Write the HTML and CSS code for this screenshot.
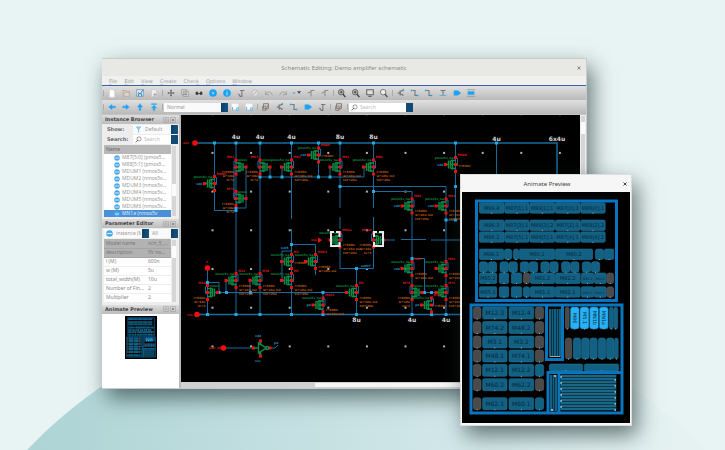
FILE: index.html
```html
<!DOCTYPE html>
<html lang="en">
<head>
<meta charset="utf-8">
<title>Schematic Editing</title>
<link rel="stylesheet" href="styles.css">
</head>
<body>
<svg class="sprite" aria-hidden="true">
  <defs>
    <symbol id="i-new" viewBox="0 0 12 12"><path d="M3 2h4l2 2v7H3z" fill="#fff" stroke="#d2d2d2" stroke-width=".6"/></symbol>
    <symbol id="i-open" viewBox="0 0 12 12"><path d="M2 3h4l1 1h3v6H3z" fill="#ddd4cc" stroke="#c9a58d"/><path d="M3 10l1-5h6" fill="none" stroke="#aaa"/></symbol>
    <symbol id="i-save" viewBox="0 0 12 12"><path d="M2 2h8v8H2z" fill="#d9eef9" stroke="#8298a5"/><path d="M4 10V7h4v3M4 5l2 2 4-5" fill="none" stroke="#2a87c4" stroke-width="1.2"/></symbol>
    <symbol id="i-doc" viewBox="0 0 12 12"><path d="M3 2h6v8H3z" fill="#eee" stroke="#ccc"/><path d="M5 8h4M7 6v4" stroke="#999"/></symbol>
    <symbol id="i-move" viewBox="0 0 12 12"><path d="M6 2v8M2 6h8M5 3h2M5 9h2M3 5v2M9 5v2" stroke="#666" stroke-width="1.3"/></symbol>
    <symbol id="i-copy" viewBox="0 0 12 12"><path d="M2 2h6v6H2zM4 4h6v6H4z" fill="#ddd" stroke="#999"/><path d="M6 5v3h2" fill="none" stroke="#777"/></symbol>
    <symbol id="i-dots" viewBox="0 0 12 12"><path d="M2 5h3v3H2zM7 5h3v3H7zM5 6h2v1H5zM3 4h1v1H3zM8 4h1v1H8z" fill="#333"/></symbol>
    <symbol id="i-ring" viewBox="0 0 12 12"><circle cx="6" cy="6" r="4.6" fill="#1ba4f4"/><circle cx="6" cy="6" r="1.2" fill="#b3e0fa"/></symbol>
    <symbol id="i-info" viewBox="0 0 12 12"><circle cx="6" cy="6" r="4.6" fill="#1ba4f4"/><path d="M6 3v1M6 5v4" stroke="#d0ecfc"/></symbol>
    <symbol id="i-probe" viewBox="0 0 12 12"><path d="M3 7l2 3h2V3h3M5 3h3" fill="none" stroke="#777" stroke-width="1.3"/></symbol>
    <symbol id="i-off" viewBox="0 0 12 12"><circle cx="6" cy="6" r="4" fill="#ddd" stroke="#bbb"/><path d="M4 8l4-4" stroke="#aaa"/></symbol>
    <symbol id="i-undo" viewBox="0 0 12 12"><path d="M2 4v4h4M2 8c2-5 7-4 8 1" fill="none" stroke="#999"/></symbol>
    <symbol id="i-redo" viewBox="0 0 12 12"><path d="M10 4v4H6M10 8C8 3 3 4 2 9" fill="none" stroke="#999"/></symbol>
    <symbol id="i-drop" viewBox="0 0 12 12"><path d="M1 6h3" stroke="#39a5e4" stroke-width="1.3"/><path d="M6 4h5L8.500 7z" fill="#444"/></symbol>
    <symbol id="i-pin" viewBox="0 0 12 12"><path d="M2 6l3-1 1-2h4M6 3v7" fill="none" stroke="#888" stroke-width="1.2"/></symbol>
    <symbol id="i-zoom" viewBox="0 0 12 12"><circle cx="5" cy="5" r="3.3" fill="#eee" stroke="#666"/><path d="M7 7l3 4" stroke="#555" stroke-width="1.800"/></symbol>
    <symbol id="i-zoomin" viewBox="0 0 12 12"><circle cx="5" cy="5" r="3.3" fill="#bbb" stroke="#555"/><path d="M7 7l3 4" stroke="#444" stroke-width="1.800"/><path d="M3.500 5h3M5 3.500v3" stroke="#333"/></symbol>
    <symbol id="i-fit" viewBox="0 0 12 12"><path d="M2 2h8v6H2zM4 10h4" fill="#ddd" stroke="#666" stroke-width="1.3"/></symbol>
    <symbol id="i-inst" viewBox="0 0 12 12"><path d="M5 3v6M5 6H2M6 4l3-2M6 7l3 2" fill="none" stroke="#666" stroke-width="1.3"/><path d="M9 1v3" stroke="#1ba4f4"/></symbol>
    <symbol id="i-wire" viewBox="0 0 12 12"><path d="M3 3h3v6h3" fill="none" stroke="#777" stroke-width="1.3"/><path d="M1 3h2M8 9h2" stroke="#1ba4f4" stroke-width="2"/></symbol>
    <symbol id="i-label" viewBox="0 0 12 12"><path d="M3 3h6M6 3v6" stroke="#777" stroke-width="1.3"/><path d="M2 9h8" stroke="#4aaee4"/></symbol>
    <symbol id="i-tag" viewBox="0 0 12 12"><path d="M2 3h5l4 3-4 3H2z" fill="#1ba4f4"/></symbol>
    <symbol id="i-block" viewBox="0 0 12 12"><path d="M1 2h10M1 10h10" stroke="#999"/><path d="M2 4h8v4H2z" fill="#1ba4f4"/></symbol>
    <symbol id="i-left" viewBox="0 0 12 12"><path d="M2 6l4-3v2h4v2H6v2z" fill="#1ba4f4" stroke="#1ba4f4" stroke-width=".5"/></symbol>
    <symbol id="i-right" viewBox="0 0 12 12"><path d="M10 6L6 3v2H2v2h4v2z" fill="#1ba4f4" stroke="#1ba4f4" stroke-width=".5"/></symbol>
    <symbol id="i-up" viewBox="0 0 12 12"><path d="M6 2l3 4H7v4H5V6H3z" fill="#1ba4f4" stroke="#1ba4f4" stroke-width=".5"/></symbol>
    <symbol id="i-top" viewBox="0 0 12 12"><path d="M3 2h6v1H3zM6 4l3 3H7v3H5V7H3z" fill="#1ba4f4" stroke="#1ba4f4" stroke-width=".5"/></symbol>
    <symbol id="i-pane" viewBox="0 0 12 12"><path d="M2 2h8v7H2z" fill="#fafafa"/><path d="M3 6v4M8 7h2v3H8z" stroke="#48aee8" fill="#fff"/></symbol>
    <symbol id="i-check" viewBox="0 0 12 12"><path d="M3 2h6v6H3zM2 5h4v5H2z" fill="#ccc" stroke="#777"/><path d="M4 7l2 2 3-6" fill="none" stroke="#b56a5c"/></symbol>
    <symbol id="i-funnel" viewBox="0 0 12 12"><path d="M1 1h10L7 6v5H5V6z" fill="#85c5ee"/></symbol>
    <symbol id="i-globe" viewBox="0 0 12 12"><circle cx="6" cy="6" r="5.500" fill="#45a6e8"/><path d="M2 6h8" stroke="#d4ecfb" stroke-width="2"/></symbol>
    <symbol id="i-find" viewBox="0 0 12 12"><circle cx="7" cy="5" r="3.500" fill="#fff" stroke="#555"/><path d="M5 7l-4 4" stroke="#555" stroke-width="1.500"/></symbol>
    <symbol id="i-win" viewBox="0 0 12 12"><path d="M1 1h10v10H1zM4 4h4v4H4z" fill="none" stroke="#999"/></symbol>
    <symbol id="i-shut" viewBox="0 0 12 12"><path d="M1 1h10v10H1z" fill="none" stroke="#999"/><path d="M4 4l4 4M8 4l-4 4" stroke="#777" stroke-width="1.500"/></symbol>
    <symbol id="i-close" viewBox="0 0 12 12"><path d="M3 3l6 6M9 3l-6 6" stroke="currentColor" stroke-width="2"/></symbol>
    <g id="mos">
      <path class="wire" d="M0-7V-3M0 3V7M0-6H2V1H0"/>
      <path class="body" d="M-10 0H-7M-7-4V4M-5-4V4M-5-4H0M-5 4H0M-5 0H0M-3-5V5"/>
      <path class="node-red" d="M-1.500-8.500h3v3h-3zM-1.500-1.500h3v3h-3zM-1.500 5.500h3v3h-3zM-11.500-1.500h3v3h-3z"/>
    </g>
    <pattern id="dots" x="211.500" y="113.200" width="38.600" height="38.700" patternUnits="userSpaceOnUse"><path d="M0 0h2v2h-2z" fill="#b5b5b5"/></pattern>
  </defs>
</svg>

<main class="stage">
  <section class="window" aria-label="Schematic Editing">
    <header class="titlebar"><h1>Schematic Editing: Demo amplifer schematic</h1><button class="close" aria-label="Close"><svg><use href="#i-close"/></svg></button></header>
    <nav class="menubar"><button><u>F</u>ile</button><button><u>E</u>dit</button><button><u>V</u>iew</button><button><u>C</u>reate</button><button>Chec<u>k</u></button><button><u>O</u>ptions</button><button><u>W</u>indow</button></nav>
    <div class="toolbar">
      <div class="group"><button aria-label="New"><svg><use href="#i-new"/></svg></button><button aria-label="Open"><svg><use href="#i-open"/></svg></button><button aria-label="Save"><svg><use href="#i-save"/></svg></button><button aria-label="Export"><svg><use href="#i-doc"/></svg></button></div>
      <div class="group"><button aria-label="Move"><svg><use href="#i-move"/></svg></button><button aria-label="Copy"><svg><use href="#i-copy"/></svg></button><button aria-label="Stretch"><svg><use href="#i-dots"/></svg></button><button aria-label="Delete"><svg><use href="#i-ring"/></svg></button><button aria-label="Properties"><svg><use href="#i-info"/></svg></button><button aria-label="Probe"><svg><use href="#i-probe"/></svg></button><button aria-label="Disable"><svg><use href="#i-off"/></svg></button><button aria-label="Undo"><svg><use href="#i-undo"/></svg></button><button aria-label="Redo"><svg><use href="#i-redo"/></svg></button><button aria-label="More"><svg><use href="#i-drop"/></svg></button><button aria-label="Attach"><svg><use href="#i-pin"/></svg></button><button aria-label="Detach"><svg><use href="#i-pin"/></svg></button></div>
      <div class="group"><button aria-label="Zoom in"><svg><use href="#i-zoomin"/></svg></button><button aria-label="Zoom out"><svg><use href="#i-zoomin"/></svg></button><button aria-label="Fit"><svg><use href="#i-fit"/></svg></button><button aria-label="Zoom area"><svg><use href="#i-zoom"/></svg></button></div>
      <div class="group"><button aria-label="Instance"><svg><use href="#i-inst"/></svg></button><button aria-label="Wire"><svg><use href="#i-wire"/></svg></button><button aria-label="Wide wire"><svg><use href="#i-wire"/></svg></button><button aria-label="Label"><svg><use href="#i-label"/></svg></button><button aria-label="Pin"><svg><use href="#i-tag"/></svg></button><button aria-label="Block"><svg><use href="#i-block"/></svg></button></div>
    </div>
    <div class="toolbar">
      <div class="group"><button aria-label="Back"><svg><use href="#i-left"/></svg></button><button aria-label="Forward"><svg><use href="#i-right"/></svg></button><button aria-label="Up"><svg><use href="#i-up"/></svg></button><button aria-label="Top"><svg><use href="#i-top"/></svg></button></div>
      <div class="group"><select class="combo mode" aria-label="Mode"><option>Normal</option></select><button aria-label="Save view"><svg><use href="#i-pane"/></svg></button><button aria-label="Load view"><svg><use href="#i-pane"/></svg></button></div>
      <div class="group"><button aria-label="Check"><svg><use href="#i-check"/></svg></button><button aria-label="Place"><svg><use href="#i-inst"/></svg></button><button aria-label="Route"><svg><use href="#i-wire"/></svg></button><button aria-label="Flag"><svg><use href="#i-tag"/></svg></button><button aria-label="Trace"><svg><use href="#i-probe"/></svg></button></div>
      <div class="group"><button aria-label="Verify"><svg><use href="#i-check"/></svg></button></div>
      <div class="group"><label class="field find"><svg><use href="#i-find"/></svg><input type="search" placeholder="Search" aria-label="Search design"></label></div>
    </div>
    <div class="workspace">
      <aside class="sidebar">
        <section>
          <h2>Instance Browser<svg><use href="#i-win"/></svg><svg><use href="#i-shut"/></svg></h2>
          <div class="row"><label for="show">Show:</label><span class="field"><svg><use href="#i-funnel"/></svg><select id="show" class="combo"><option>Default</option></select></span></div>
          <div class="row"><label for="search">Search:</label><span class="field find"><svg><use href="#i-find"/></svg><input id="search" type="search" placeholder="Search"></span></div>
          <div class="scroller instances">
            <div class="list">
              <h3>Name</h3>
              <ul>
                <li><svg><use href="#i-globe"/></svg>M87[5:0] (pmos5...</li>
                <li><svg><use href="#i-globe"/></svg>M88[5:1] (pmos5...</li>
                <li><svg><use href="#i-globe"/></svg>MDUM1 (nmos5v...</li>
                <li><svg><use href="#i-globe"/></svg>MDUM2 (nmos5v...</li>
                <li><svg><use href="#i-globe"/></svg>MDUM3 (nmos5v...</li>
                <li><svg><use href="#i-globe"/></svg>MDUM4 (nmos5v...</li>
                <li><svg><use href="#i-globe"/></svg>MDUM5 (nmos5v...</li>
                <li><svg><use href="#i-globe"/></svg>MDUM6 (nmos5v...</li>
                <li class="selected"><svg><use href="#i-globe"/></svg>MN1a (nmos5v</li>
              </ul>
            </div>
            <div class="vbar"><i class="low"></i></div>
          </div>
        </section>
        <section>
          <h2>Parameter Editor<svg><use href="#i-win"/></svg><svg><use href="#i-shut"/></svg></h2>
          <div class="row tight"><span class="field"><svg><use href="#i-globe"/></svg><select class="combo" aria-label="Scope"><option>instance (M</option></select></span><select class="combo half" aria-label="Filter"><option>All</option></select></div>
          <div class="scroller">
            <table>
              <tr class="fixed"><th>Model name</th><td>nch_5_...</td></tr>
              <tr class="fixed"><th>description</th><td>5V no...</td></tr>
              <tr><th>l (M)</th><td>600n</td></tr>
              <tr><th>w (M)</th><td>5u</td></tr>
              <tr><th>total_width(M)</th><td>10u</td></tr>
              <tr><th>Number of Fin...</th><td>2</td></tr>
              <tr><th>Multiplier</th><td>2</td></tr>
            </table>
            <div class="vbar"><i></i></div>
          </div>
        </section>
        <section class="thumb">
          <h2>Animate Preview<svg><use href="#i-win"/></svg><svg><use href="#i-shut"/></svg></h2>
          <svg class="mini" viewBox="463 192 168 231" preserveAspectRatio="none"><rect x="463" y="192" width="168" height="231"/><use href="#layout"/></svg>
        </section>
      </aside>
      <div class="editor">
        <svg class="canvas" viewBox="181 115 399 267" role="img" aria-label="Amplifier schematic">
          <rect x="181" y="115" width="399" height="267"/>
          <rect x="181" y="115" width="399" height="267" fill="url(#dots)"/>
          <path class="wire rail" d="M195 143H557V200M197 314.500H470"/>
          <path class="wire" d="M214.500 143V210.500H236M236 143V314M260 143V314M291.500 143V219M291.500 229V314M318.500 143V177M260 177H364V167M270 167V177M282 167V177M330 167V177M246 167V208H236M234 167V198H236M340 143V208M340 217V229M340 236V268.500H373.500V217M373.500 143V208M340 186.500H446V314M373.500 191.500H412V314M455.500 143V220H446M496.500 143V180M207.500 268V314M207.500 282.500H219V292.500M217 292.500H347M226 280V292M250 280V292M291.500 244.500H315.500V275M291.500 251H282V280M356.500 268.500V314M412 258.500H424.500V292.500H436M323 292V314M384 240H395M401 239.500H426M431 240H460M223 348H253M270 348H275L278 345"/>
          <path class="join" d="M213 141.500h3v3h-3zM234.500 141.500h3v3h-3zM258.500 141.500h3v3h-3zM290 141.500h3v3h-3zM317 141.500h3v3h-3zM338.500 141.500h3v3h-3zM372 141.500h3v3h-3zM454 141.500h3v3h-3zM495 141.500h3v3h-3zM258.500 175.500h3v3h-3zM268.500 175.500h3v3h-3zM280.500 175.500h3v3h-3zM317 175.500h3v3h-3zM328.500 175.500h3v3h-3zM338.500 185h3v3h-3zM372 190h3v3h-3zM234.500 207h3v5h-3zM454 185h3v3h-3zM454 218.500h3v3h-3zM444.500 218.500h3v3h-3zM290 243h3v3h-3zM206 313h3v3h-3zM234.500 313h3v3h-3zM258.500 313h3v3h-3zM290 313h3v3h-3zM321.500 313h3v3h-3zM355 313h3v3h-3zM410.500 313h3v3h-3zM444.500 313h3v3h-3zM430 313h3v3h-3zM217.500 291h3v3h-3zM225 291h3v3h-3zM249 291h3v3h-3zM321.500 291h3v3h-3zM355 267h3v3h-3zM206 281h3v3h-3zM423 291h3v3h-3zM430 291h3v3h-3zM410.500 257h3v3h-3z"/>
          <g id="devices"></g>
          <path class="bracket" d="M334 232H331V246H339.500V242M339.500 237V232H336M379 232H383V246H374V242M374 237V232H377"/>
          <g class="node-red"><circle cx="195" cy="143" r="2.800"/><circle cx="197" cy="314.500" r="2.800"/><circle cx="207.500" cy="268" r="2.800"/><circle cx="223.500" cy="348" r="2.800"/><path d="M318 237.500l4 2.500-4 3zM252 346.500h3v3h-3zM268.500 346.500h3v3h-3zM259 339.500h3v3h-3zM259 354.500h3v3h-3z"/></g>
          <path class="body" d="M258.500 343V353L266 348ZM260.500 342V344M260.500 352V355M254 348H258"/><circle class="body" cx="267" cy="348" r="1.500"/>
          <g class="size"><text x="236" y="139">4u</text><text x="260" y="139">4u</text><text x="291.500" y="139">4u</text><text x="340" y="139">8u</text><text x="373.500" y="139">8u</text><text x="496.500" y="141">4u</text><text x="557" y="141">6x4u</text><text x="356.500" y="322">8u</text><text x="412" y="322">4u</text><text x="446" y="322">4u</text></g>
          <g class="red"><text x="183" y="144">out</text><text x="187" y="316">vss</text><text x="206" y="263">ii</text><text x="209" y="349">pwr_dn</text><text x="311" y="241">inp</text></g>
          <g class="blue"><text x="255" y="337">vdd</text><text x="255" y="362">vss</text><text x="274" y="344">pd</text><text x="281" y="249">net5</text><text x="361" y="267">net07</text></g>
        </svg>
        <div class="vbar"><i></i></div>
        <div class="hbar"><i></i></div>
      </div>
    </div>
  </section>

  <section class="window preview" aria-label="Animate Preview">
    <header class="titlebar"><h1>Animate Preview</h1><button class="close" aria-label="Close preview"><svg><use href="#i-close"/></svg></button></header>
    <svg class="layout" viewBox="463 192 168 231" role="img" aria-label="Device layout"><rect x="463" y="192" width="168" height="231"/><g id="layout"></g></svg>
  </section>
</main>
<script src="drawing.js"></script>
</body>
</html>
```
FILE: styles.css
```css
* { box-sizing: border-box; }
body {
  margin: 0;
  min-height: 100vh;
  background: #e8f3f3;
  font: 5px/7px "Noto Sans", sans-serif;
  color: #666;
}
h1, h2, h3, ul { margin: 0; padding: 0; font-size: inherit; list-style: none; }
button, input, select { font: inherit; color: inherit; border: 0; margin: 0; padding: 0; background: none; }
.sprite { position: absolute; width: 0; height: 0; }

.stage {
  position: relative;
  min-height: 100vh;
  padding: 58px 138px 0 102px;
  background: radial-gradient(circle at 366px 772px, transparent 467px, #e8f3f3 468px), linear-gradient(90deg, #aed4d5 40px, #d4e8ea 480px, #e6f2f2 680px);
  overflow: hidden;
}

.window {
  background: #f0f0ef;
  border: 1px solid #c9cccb;
  border-width: 1px 1px 1px 0;
  box-shadow: 5px 9px 20px rgba(30, 50, 50, .65);
}
.titlebar { display: flex; align-items: center; height: 17px; padding: 0 4px 0 10px; background: #e8e8e5; color: #888; }
.titlebar h1 { flex: 1; text-align: center; font: 6px/10px "Noto Sans", sans-serif; }
.close { display: flex; }
.close svg { width: 6px; height: 6px; }

.menubar { display: flex; gap: 7px; height: 10px; padding: 0 0 0 7px; border-bottom: 1px solid #3a62a8; font: 5px/8px "DejaVu Sans", sans-serif; color: #999; }
.menubar u { text-decoration-thickness: 1px; text-decoration-color: #ccc; }

.toolbar { display: flex; height: 14px; background: linear-gradient(#e0e0e0, #b9b9b9); }
.toolbar:last-of-type { height: 15px; }
.group { display: flex; align-items: center; padding-left: 3px; background: linear-gradient(#aaa, #aaa) 1px center / 1px 6px no-repeat; }
.group button { display: flex; justify-content: center; width: 14px; }
.group svg { width: 10px; height: 10px; }

.combo {
  appearance: none;
  flex: 1;
  min-width: 0;
  height: 9px;
  padding: 0 8px 0 3px;
  color: #999;
  background: linear-gradient(90deg, #0c3f6b, #17527f) right / 7px 100% no-repeat #fafafa;
}
.mode { width: 64px; flex: none; }
.field { display: flex; align-items: center; flex: 1; min-width: 0; height: 9px; background: #f7f9fa; }
.field svg { width: 7px; height: 7px; margin-left: 2px; flex: none; }
.field input { flex: 1; width: 38px; min-width: 0; height: 9px; padding-left: 2px; outline: 0; }
.field input::placeholder { color: #bbb; opacity: 1; }
.find { border-right: 7px solid #124a76; background: #fff; }
.group .field { width: 64px; flex: none; }

.workspace { display: grid; grid-template-columns: 79px minmax(0, 1fr); padding-top: 1px; background: #c4c4c4; }
.sidebar { display: flex; flex-direction: column; gap: 2px; border-right: 2px solid #bbb; background: #ededed; }
.sidebar h2 { display: flex; align-items: center; gap: 1px; height: 9px; padding: 0 3px; background: linear-gradient(#ddd, #bcbcbc); color: #444; font: 700 5px/7px "DejaVu Sans", sans-serif; white-space: nowrap; }
.sidebar h2 svg { width: 6px; height: 6px; flex: none; }
.sidebar h2 svg:nth-of-type(1) { margin-left: auto; }
.row { display: flex; align-items: center; height: 10px; padding: 0 1px 0 5px; }
.row label { width: 26px; font: 700 5px/7px "DejaVu Sans", sans-serif; color: #666; }
.row.tight { padding-left: 2px; }
.row .half { flex: none; width: 29px; }
.scroller { display: flex; margin: 1px 2px 0 2px; background: #fff; }
.list { flex: 1; min-width: 0; }
.list h3 { height: 9px; padding: 1px 2px; background: #b8b8b8; font-weight: 400; }
.list li { display: flex; align-items: center; gap: 2px; height: 7px; padding-left: 10px; white-space: nowrap; overflow: hidden; color: #999; }
.list li svg { width: 6px; height: 6px; flex: none; }
.list .selected { background: #4a90d9; color: #d8eaf9; }
.vbar { width: 6px; flex: none; padding-top: 6px; background: #d6d6d6; border: 1px solid #eee; }
.vbar i { display: block; height: 12px; background: #fbfbfb; }
.vbar .low { margin-top: 32px; }
table { flex: 1; min-width: 0; border-collapse: collapse; table-layout: fixed; }
th, td { height: 9px; padding: 0 0 0 2px; font-weight: 400; text-align: left; white-space: nowrap; overflow: hidden; color: #888; border-bottom: 1px solid #eee; }
th { width: 42px; }
.fixed th, .fixed td { background: #b2b2b2; border-color: #a5a5a5; color: #777; }
.thumb { flex: 1; background: #fff; }
.mini { display: block; width: 32px; height: 43px; margin: 2px auto; }

.editor { display: grid; grid-template-columns: minmax(0, 1fr) 6px; grid-template-rows: auto 6px; }
.canvas, .layout { display: block; width: 100%; height: auto; }
.canvas { background: #000; }
.hbar { grid-column: 1 / -1; padding: 1px 18% 1px 33%; background: #d0d0d0; }
.hbar i { display: block; height: 4px; background: #f5f5f5; }

.wire { fill: none; stroke: #176c9b; stroke-width: 1; }
.rail { stroke-width: 1.500; }
.join { fill: #25a7e8; }
.body { fill: none; stroke: #0b8a45; stroke-width: 1.500; }
.node-red { fill: #f20d0d; }
.bracket { fill: none; stroke: #e8e8e8; stroke-width: 2; }
.size { fill: #d6d6d6; font: 700 6px "DejaVu Sans", sans-serif; text-anchor: middle; }
.red, .green, .orange, .blue { font: 700 3px "DejaVu Sans", sans-serif; }
.red { fill: #d81818; }
.green { fill: #0a8a40; }
.orange { fill: #b85612; }
.blue { fill: #1c8fcc; }
.end { text-anchor: end; }

.preview { position: absolute; top: 174px; right: 93px; width: 172px; border: 1px solid #ddd; background: #f6f6f6; padding: 0 1px 2px; }
.preview .titlebar { padding-right: 2px; background: #f6f6f6; color: #444; }
.cell { fill: #126083; stroke: #2b7c9e; stroke-width: .5; }
.dummy { fill: #4a4a4a; stroke: #666; stroke-width: .5; }
.bright { fill: #28b2f5; stroke: #0c5c86; stroke-width: .5; }
.frame { fill: none; stroke: #0875bd; stroke-width: 3; }
.stripe { fill: none; stroke: #126083; stroke-width: 2; }
.tick { fill: #9aacb2; }
.name { fill: #06293d; font: 5px "DejaVu Sans", sans-serif; text-anchor: middle; }
.big { font-size: 6px; }
.narrow { font-size: 3px; }
```
FILE: drawing.js
```js
const NS = "http://www.w3.org/2000/svg";

function add(parent, tag, attrs, text) {
  const el = document.createElementNS(NS, tag);
  for (const key in attrs) el.setAttribute(key, attrs[key]);
  if (text) el.textContent = text;
  parent.appendChild(el);
  return el;
}

// Transistors: drain/source x, centre y, mirrored, instance name, parameter lines, gate net
const devices = [
  [214.5, 183.5, 0, "MN80", 0, "vdd"], [236, 167, 1, "M62", 3], [236, 198.5, 1, "M74", 3],
  [260, 167, 1, "M63", 3], [291.5, 167, 0, "M64", 3], [318.5, 155, 0, "M080", 1, "vdd"],
  [340, 167, 0, "M81", 3], [373.5, 167, 0, "M82", 3], [455.5, 164.5, 0, "M086", 1, "vdd"],
  [412, 206, 0, "M83", 3, "vdd"], [446, 206, 0, "M84", 3, "vdd"], [340, 240, 0, "MN1a", 3],
  [373.5, 240, 1, "MN1b", 3], [207.5, 292.5, 1, "M10", 3], [236, 280.5, 0, "M12", 3],
  [260, 280.5, 0, "M48", 3], [291.5, 261.5, 0, "M3", 1], [291.5, 280.5, 0, "M5", 3],
  [315.5, 261.5, 0, "M003", 2], [323, 305, 0, "M005", 2, "pd"], [356.5, 292.5, 0, "M2", 3],
  [412, 268.5, 0, "M60", 2, "vdd"], [446, 268.5, 0, "M61", 2], [412, 292.5, 1, "M70", 3],
  [446, 292.5, 0, "M71", 3], [431.5, 305, 0, "M72", 1, "pd"]
];
const schematic = document.getElementById("devices");
for (const [x, y, mirrored, id, lines, net] of devices) {
  const kind = y < 230 ? "pmos" : "nmos";
  add(schematic, "use", { href: "#mos", transform: `translate(${x} ${y})${mirrored ? " scale(-1 1)" : ""}` });
  if (mirrored) {
    add(schematic, "text", { class: "green", x: x + 2, y: y - 6 }, kind);
    add(schematic, "text", { class: "red end", x: x - 2, y: y - 9 }, id);
  } else {
    add(schematic, "text", { class: "green end", x: x - 2, y: y - 6 }, kind + "5v_na");
    add(schematic, "text", { class: "red", x: x + 2, y: y - 9 }, id);
  }
  const params = mirrored ? ["l=600n", "w=10u", "m=2"] : ["l=600n", "w=10u m2", "tot=20u"];
  const top = lines === 1 ? y + 2 : y + 6;
  params.slice(0, lines).forEach((line, i) =>
    add(schematic, "text", { class: mirrored ? "orange end" : "orange", x: x + (mirrored ? -2 : 3), y: top + i * 4 }, line));
  if (net) add(schematic, "text", { class: "blue end", x: x - 12, y: y + 1 }, net);
}

const layout = document.getElementById("layout");
function cell(x1, x2, y, h, kind, name, size) {
  const r = x2 - x1 < 10 ? 2.5 : 1.5;
  add(layout, "rect", { class: kind || "cell", x: x1 + 0.3, y, width: x2 - x1 - 0.6, height: h, rx: r });
  add(layout, "rect", { class: "tick", x: (x1 + x2) / 2 - 0.5, y: y + h - 0.5, width: 1, height: 1 });
  if (name) add(layout, "text", { class: x2 - x1 < 14 ? "name narrow" : "name " + (size || ""), x: (x1 + x2) / 2, y: y + h / 2 + 2 }, name);
}

// Upper block
const wide = [480, 505.5, 530.5, 556, 581.5, 606.5];
[
  [202.7, ["M86.4", "M87[1].1", "M89[1].1", "M87[0].1", "M89[0].1"]],
  [220, ["M86.3", "M87[3].1", "M89[3].2", "M87[2].1", "M89[2].2"]],
  [231.8, ["M86.2", "M87[5].1", "M89[5].1", "M87[4].1", "M89[4].2"]]
].forEach(([y, names]) => names.forEach((name, i) => cell(wide[i], wide[i + 1], y, 10.5, "cell", name)));
[[480, 505, "M86.1"], [505, 513], [514, 520], [520, 556, "M80.1"], [556, 594, "M80.2"], [596, 605], [605, 615]]
  .forEach(([a, b, name]) => cell(a, b, 249, 10.5, "cell", name));
[480, 500.7, 521, 541.5, 562.3, 583].forEach(x => { cell(x, x + 9, 261.8, 10.5); cell(x + 9, x + 18, 261.8, 10.5); });
[[273, 2], [286.7, 1]].forEach(([y, n]) => {
  [[480, 498, "M85."], [500, 510], [512, 523], [531, 556, "M81."], [556, 581.5, "M82."], [582, 595, "M83."], [595, 607.5, "M84."]]
    .forEach(([a, b, name]) => cell(a, b, y, 10.5, "cell", name && name + n));
  cell(524, 531, y, 10.5, n === 2 ? "dummy" : "cell");
  cell(607.5, 615, y, 10.5, "dummy");
});

// Lower left array
[
  [307, "M12.3", "M12.4"], [321.5, "M74.2", "M48.2"], [336, "M3.1", "M3.2"], [350, "M48.1", "M74.1"],
  [364.3, "M12.1", "M12.2"], [378.7, "M60.2", "M62.2"], [397.7, "M62.1", "M60.1"]
].forEach(([y, left, right]) => {
  cell(474, 482.3, y, 12, "dummy");
  cell(483.3, 508.3, y, 12, "cell", left, "big");
  cell(509.7, 535, y, 12, "cell", right, "big");
  cell(536, 545, y, 12, y === 364.3 || y === 397.7 ? "cell" : "dummy");
});

// Lower right block
cell(566, 570.5, 307, 22, "dummy");
[[571, "M86"], [580.7, "M5.1"], [590.3, "MN1b"], [600, "MN1a"]].forEach(([x, name]) => {
  cell(x, x + 9.5, 307, 22, "bright");
  add(layout, "text", { class: "name", transform: `translate(${x + 3.2} 318) rotate(90)` }, name);
});
cell(610, 614.5, 307, 22); cell(614.5, 619, 307, 22);
cell(566, 573, 338, 21, "dummy");
[574, 582.3, 590.5, 599, 607.3].forEach(x => cell(x, x + 8, 338, 21));
cell(615.3, 619.5, 338, 21);
cell(550, 584, 364, 7); cell(585, 620, 364, 7);
add(layout, "path", { class: "stripe", d: "M551 309V357M553.500 309V357M556 309V357M558.500 309V357M561 309V357M552 375V411M554.500 375V411M557 375V411" });
for (let i = 0; i < 12; i++) {
  const y = 376 + i * 3;
  add(layout, "rect", { class: "cell", x: 562, y: y - 1, width: 55, height: 2 });
  if (i % 2 === 0) add(layout, "rect", { class: "tick", x: 561, y, width: 2, height: 2 });
  else add(layout, "rect", { class: "tick", x: 615.5, y, width: 1.5, height: 2 });
}
add(layout, "path", { class: "tick", d: "M551 356h10v1h-10zM555 375h2v2h-2zM552 409h2v2h-2z" });
add(layout, "path", { class: "frame", d: "M477.500 201H617.500V300.500H477.500ZM472 305H623V413H472ZM547.500 305V359.500H563.500V305M549 413V372.500H623M560 372.500V413" });
```
